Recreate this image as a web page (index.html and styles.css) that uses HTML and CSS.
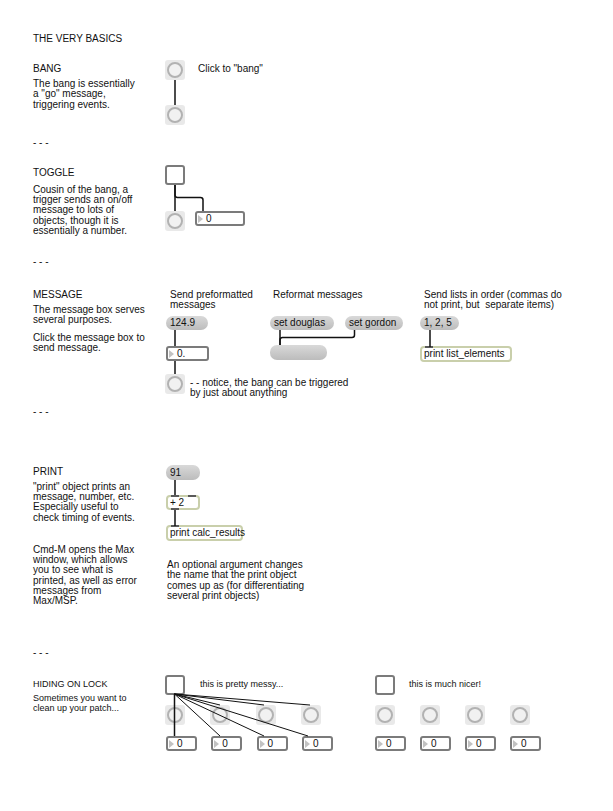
FILE: index.html
```html
<!DOCTYPE html>
<html>
<head>
<meta charset="utf-8">
<title>The very basics</title>
<link rel="stylesheet" href="styles.css">
</head>
<body>
<div class="page">
  <div class="notes">
    <p class="title">THE VERY BASICS</p>

    <section class="topic topic-bang">
      <h2>BANG</h2>
      <p class="desc">The bang is essentially<br>a "go" message,<br>triggering events.</p>
    </section>
    <p class="sep sep-1">- - -</p>

    <section class="topic topic-toggle">
      <h2>TOGGLE</h2>
      <p class="desc">Cousin of the bang, a<br>trigger sends an on/off<br>message to lots of<br>objects, though it is<br>essentially a number.</p>
    </section>
    <p class="sep sep-2">- - -</p>

    <section class="topic topic-message">
      <h2>MESSAGE</h2>
      <p class="desc">The message box serves<br>several purposes.</p>
      <p class="desc desc-more">Click the message box to<br>send message.</p>
    </section>
    <p class="sep sep-3">- - -</p>

    <section class="topic topic-print">
      <h2>PRINT</h2>
      <p class="desc">"print" object prints an<br>message, number, etc.<br>Especially useful to<br>check timing of events.</p>
      <p class="desc desc-cmd">Cmd-M opens the Max<br>window, which allows<br>you to see what is<br>printed, as well as error<br>messages from<br>Max/MSP.</p>
    </section>
    <p class="sep sep-4">- - -</p>

    <section class="topic topic-hiding small">
      <h2>HIDING ON LOCK</h2>
      <p class="desc">Sometimes you want to<br>clean up your patch...</p>
    </section>
  </div>

  <div class="canvas">
    <svg class="cords" width="448" height="811" viewBox="0 0 448 811">
      <g class="cord">
        <path d="M10 80 V105"/>
        <path d="M10 185 V211"/>
        <path d="M10 185 V195 Q10 197.5 12.5 197.5 H35.5 Q38 197.5 38 200 V211"/>
        <path d="M10 330 V346"/>
        <path d="M10 361 V374"/>
        <path d="M115 330 V345"/>
        <path d="M189.5 330 V335 Q189.5 337.5 187 337.5 H117.5 Q115 337.5 115 340 V345"/>
        <path d="M265 330 V347"/>
        <path d="M10 480 V495"/>
        <path d="M10 510 V526"/>
        <path d="M9.5 694 V736"/>
      </g>
      <g class="cord thin">
        <path d="M9.5 694 L55 736"/>
        <path d="M9.5 694 L99 736"/>
        <path d="M9.5 694 L143 736"/>
        <path d="M9.5 694 L55 705"/>
        <path d="M9.5 694 L99 705"/>
        <path d="M9.5 694 L145 705"/>
      </g>
    </svg>

    <!-- BANG -->
    <div class="bang node-bang-a"></div>
    <div class="bang node-bang-b"></div>
    <p class="comment c-click">Click to "bang"</p>

    <!-- TOGGLE -->
    <div class="toggle node-toggle-a"></div>
    <div class="bang node-bang-c"></div>
    <div class="num node-num-a">0</div>

    <!-- MESSAGE -->
    <p class="comment c-preformat">Send preformatted<br>messages</p>
    <p class="comment c-reformat">Reformat messages</p>
    <p class="comment c-lists">Send lists in order (commas do<br>not print, but&nbsp; separate items)</p>
    <div class="msg node-msg-124">124.9</div>
    <div class="num node-num-b">0.</div>
    <div class="bang node-bang-d"></div>
    <p class="comment c-notice">- - notice, the bang can be triggered<br>by just about anything</p>
    <div class="msg node-msg-douglas">set douglas</div>
    <div class="msg node-msg-gordon">set gordon</div>
    <div class="msg node-msg-empty"></div>
    <div class="msg node-msg-list">1, 2, 5</div>
    <div class="obj node-obj-list">print list_elements</div>

    <!-- PRINT -->
    <div class="msg node-msg-91">91</div>
    <div class="obj two-in node-obj-plus">+ 2<span class="outlet"></span></div>
    <div class="obj node-obj-calc">print calc_results</div>
    <p class="comment c-optional">An optional argument changes<br>the name that the print object<br>comes up as (for differentiating<br>several print objects)</p>

    <!-- HIDING ON LOCK -->
    <div class="toggle node-toggle-b"></div>
    <p class="comment small c-messy">this is pretty messy...</p>
    <div class="row row-bangs-left">
      <div class="bang"></div><div class="bang"></div><div class="bang"></div><div class="bang"></div>
    </div>
    <div class="row row-nums-left">
      <div class="num short">0</div><div class="num short">0</div><div class="num short">0</div><div class="num short">0</div>
    </div>

    <div class="toggle node-toggle-c"></div>
    <p class="comment small c-nicer">this is much nicer!</p>
    <div class="row row-bangs-right">
      <div class="bang"></div><div class="bang"></div><div class="bang"></div><div class="bang"></div>
    </div>
    <div class="row row-nums-right">
      <div class="num short">0</div><div class="num short">0</div><div class="num short">0</div><div class="num short">0</div>
    </div>
  </div>
</div>
</body>
</html>
```

FILE: styles.css
```css
*, *::before, *::after { box-sizing: border-box; }

body {
  margin: 0;
  background: #ffffff;
  color: #111111;
  font-family: "Liberation Sans", Arial, sans-serif;
  font-size: 10px;
  line-height: 10.3px;
}

p, h2 { margin: 0; font-weight: normal; font-size: 10px; white-space: nowrap; }

.page {
  display: grid;
  grid-template-columns: 132px 448px;
  padding-left: 33px;
  width: 613px;
  height: 811px;
}

/* left column notes */
.notes {
  padding-top: 34px;
  display: flex;
  flex-direction: column;
}

.topic .desc { margin-top: 4.7px; }
.topic-bang { margin-top: 19.7px; }
.sep-1 { margin-top: 28px; }
.topic-toggle { margin-top: 19.7px; }
.topic-toggle .desc { margin-top: 6.7px; }
.sep-2 { margin-top: 21px; }
.topic-message { margin-top: 22.2px; }
.topic-message .desc-more { margin-top: 7.4px; }
.sep-3 { margin-top: 53.4px; }
.topic-print { margin-top: 49.7px; }
.topic-print .desc-cmd { margin-top: 21.8px; }
.sep-4 { margin-top: 41.2px; }
.topic-hiding { margin-top: 20.7px; }

.small, .small p, .small h2 { font-size: 9px; line-height: 10px; }
.topic-hiding .desc { margin-top: 4px; }

/* patcher canvas */
.canvas {
  position: relative;
  height: 811px;
}

.cords {
  position: absolute;
  left: 0;
  top: 0;
  z-index: 2;
  pointer-events: none;
}
.cord path { fill: none; stroke: #111; stroke-width: 1.5; }
.cord.thin path { stroke-width: 1; }

.comment { position: absolute; }
.c-click { left: 33px; top: 64px; }
.c-preformat { left: 5px; top: 290px; }
.c-reformat { left: 108px; top: 290px; }
.c-lists { left: 259px; top: 290px; }
.c-notice { left: 25px; top: 378px; }
.c-optional { left: 2px; top: 560px; }
.c-messy { left: 35px; top: 679px; }
.c-nicer { left: 244px; top: 679px; }

/* bang */
.bang {
  position: relative;
  width: 20px;
  height: 20px;
  border-radius: 3px;
  background: #e9e9e9;
}
.bang::after {
  content: "";
  position: absolute;
  left: 2px;
  top: 2px;
  width: 16px;
  height: 16px;
  border: 2px solid #b2b2b2;
  border-radius: 50%;
  background: #f1f1f1;
}

/* toggle */
.toggle {
  width: 20px;
  height: 20px;
  border: 2px solid #7b7b7b;
  border-radius: 3px;
  background: #fff;
}

/* number box */
.num {
  position: relative;
  height: 15px;
  border: 2px solid #7b7b7b;
  border-radius: 3px;
  background: #fff;
  padding-left: 9px;
  font-size: 10px;
  line-height: 11px;
}
.num::before {
  content: "";
  position: absolute;
  left: 1px;
  top: 1.5px;
  border-left: 5px solid #c2c2c2;
  border-top: 4px solid transparent;
  border-bottom: 4px solid transparent;
}
.num.short { width: 31px; }

/* message box */
.msg {
  height: 14px;
  border-radius: 7px;
  background: linear-gradient(#d9d9d9, #bcbcbc);
  padding-left: 4px;
  line-height: 14px;
  font-size: 10px;
  white-space: nowrap;
}

/* object box */
.obj {
  height: 16px;
  border: 2px solid #c9cfab;
  border-radius: 4px;
  background: #fff;
  padding-left: 2px;
  line-height: 12px;
  font-size: 10px;
  white-space: nowrap;
}
.obj::before,
.two-in::after,
.obj .outlet {
  content: "";
  position: absolute;
  width: 8px;
  height: 2px;
  background: #5a5a5a;
}
.obj::before { left: 3px; top: -2px; }
.two-in::after { right: 2px; top: -2px; }
.obj .outlet { left: 3px; bottom: -2px; }

/* node placement on the patcher canvas */
.node-bang-a, .node-bang-b, .node-bang-c, .node-bang-d,
.node-toggle-a, .node-toggle-b, .node-toggle-c,
.node-num-a, .node-num-b,
.node-msg-124, .node-msg-douglas, .node-msg-gordon, .node-msg-empty, .node-msg-list, .node-msg-91,
.node-obj-list, .node-obj-plus, .node-obj-calc,
.row { position: absolute; }

.node-bang-a { left: 0; top: 60px; }
.node-bang-b { left: 0; top: 105px; }
.node-toggle-a { left: 0; top: 165px; }
.node-bang-c { left: 0; top: 211px; }
.node-num-a { left: 30px; top: 211px; width: 50px; }
.node-msg-124 { left: 1px; top: 316px; width: 42px; }
.node-num-b { left: 1px; top: 346px; width: 43px; }
.node-bang-d { left: 0; top: 374px; }
.node-msg-douglas { left: 105px; top: 316px; width: 64px; }
.node-msg-gordon { left: 180px; top: 316px; width: 58px; }
.node-msg-empty { left: 105px; top: 345px; width: 57px; height: 15px; }
.node-msg-list { left: 255px; top: 316px; width: 39px; }
.node-obj-list { left: 255px; top: 346px; width: 92px; }
.node-msg-91 { left: 1px; top: 465px; width: 34px; height: 15px; line-height: 15px; }
.node-obj-plus { left: 1px; top: 495px; width: 34px; height: 15px; line-height: 11px; }
.node-obj-calc { left: 1px; top: 525px; width: 77px; }
.node-toggle-b { left: 0; top: 675px; }
.node-toggle-c { left: 210px; top: 675px; }

.row { display: flex; gap: 25.3px; }
.row-bangs-left { left: 0; top: 705px; }
.row-nums-left { left: 1px; top: 736px; gap: 14.3px; }
.row-bangs-right { left: 210px; top: 705px; gap: 25px; }
.row-nums-right { left: 210px; top: 736px; gap: 14px; }
```
